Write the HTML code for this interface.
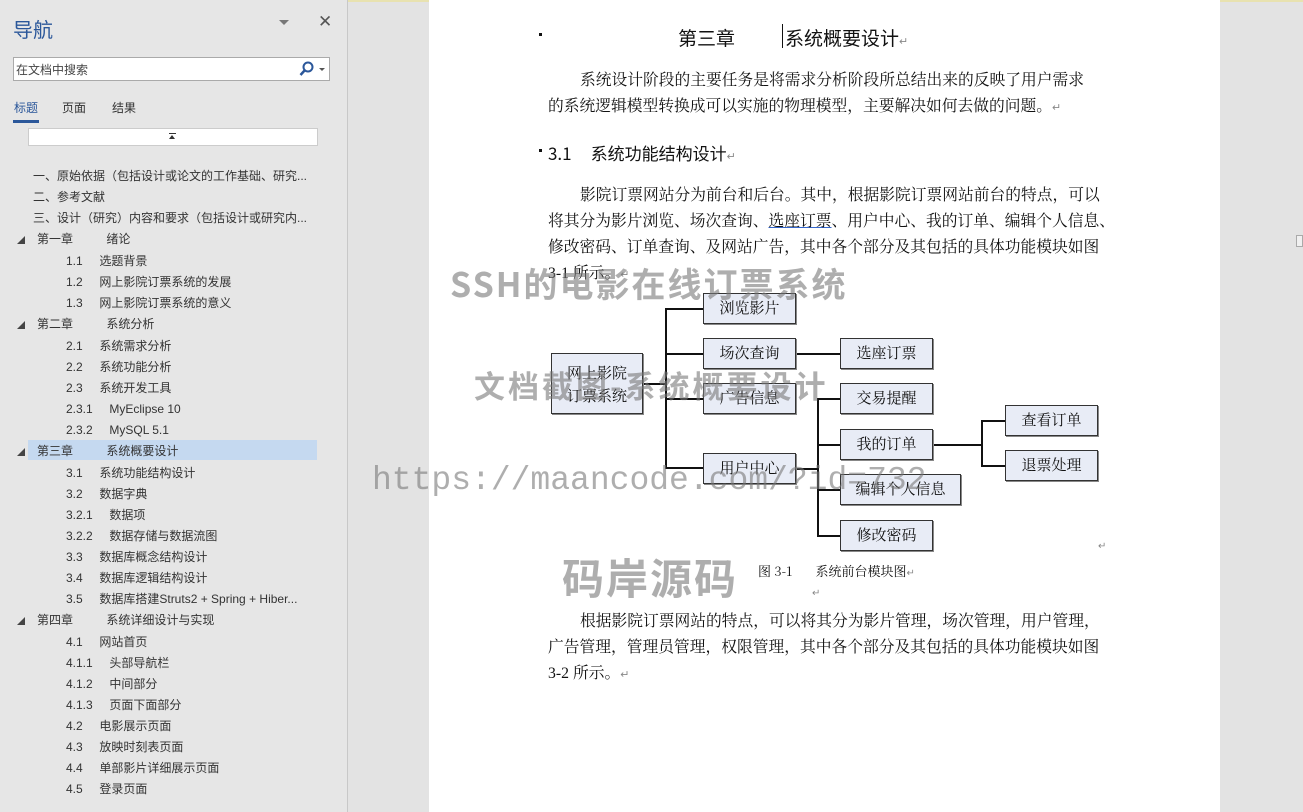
<!DOCTYPE html>
<html><head><meta charset="utf-8"><style>
*{margin:0;padding:0;box-sizing:border-box}
body{width:1303px;height:812px;overflow:hidden;background:#e3e3e3;font-family:"Liberation Sans","Noto Sans CJK SC",sans-serif;position:relative}
.nav{position:absolute;left:0;top:0;width:348px;height:812px;background:#e6e6e6;border-right:1px solid #c8c8c8}
.a{position:absolute;white-space:nowrap}
.nv{font-size:12px;color:#333}
.page{position:absolute;left:429px;top:0;width:791px;height:812px;background:#fff}
.doc{font-family:"Liberation Serif","Noto Serif CJK SC",serif;font-size:15px;color:#111}
.p{position:absolute;white-space:nowrap;font-family:"Noto Serif CJK SC",serif;font-size:15.75px;line-height:26px;color:#111}
.box{position:absolute;background:#e8ecf6;border:1.5px solid #333;box-shadow:1px 1px 0 #888;font-family:"Noto Serif CJK SC",serif;font-size:15px;text-align:center;color:#111}
.l{position:absolute;background:#111}
.wm{position:absolute;color:rgba(120,120,120,.6);font-weight:bold;white-space:nowrap;font-family:"Noto Sans CJK SC",sans-serif}
.tri{display:inline-block;width:20px;font-size:8px;color:#444}
.r{margin-left:49px}
</style></head><body>
<div style="position:absolute;left:0;top:0;width:1303px;height:2px;background:#e8e2b0"></div>
<div class="nav">
<div class="a" style="left:13px;top:14px;font-size:20px;color:#2b579a">导航</div>
<div class="a" style="left:279px;top:20px;width:0;height:0;border-left:5px solid transparent;border-right:5px solid transparent;border-top:5px solid #777"></div>
<div class="a" style="left:318px;top:12px;font-size:17px;color:#555">✕</div>
<div class="a" style="left:13px;top:57px;width:317px;height:24px;background:#fff;border:1px solid #aaa"></div>
<div class="a nv" style="left:16px;top:61px;font-size:12px;color:#444">在文档中搜索</div>
<svg class="a" style="left:299px;top:61px" width="16" height="16"><circle cx="9" cy="6" r="4.5" fill="none" stroke="#2b579a" stroke-width="2"/><line x1="6" y1="9" x2="1.5" y2="14" stroke="#2b579a" stroke-width="2.5"/></svg>
<div class="a" style="left:319px;top:68px;border-left:3px solid transparent;border-right:3px solid transparent;border-top:3px solid #555"></div>
<div class="a" style="left:14px;top:99px;font-size:12px;color:#2b579a">标题</div>
<div class="a" style="left:13px;top:120px;width:26px;height:3px;background:#2b579a"></div>
<div class="a" style="left:62px;top:99px;font-size:12px;color:#333">页面</div>
<div class="a" style="left:112px;top:99px;font-size:12px;color:#333">结果</div>
<div class="a" style="left:28px;top:128px;width:290px;height:18px;background:#fff;border:1px solid #ccc"></div>
<div class="a" style="left:169px;top:133px;width:7px;height:1px;background:#333"></div>
<div class="a" style="left:169px;top:135px;border-left:3.5px solid transparent;border-right:3.5px solid transparent;border-bottom:4px solid #333"></div>
<div class="a" style="left:28px;top:440px;width:289px;height:20px;background:#c5d9f0"></div>
<div class="a nv" style="left:33px;top:166px;line-height:21px">
一、原始依据（包括设计或论文的工作基础、研究...<br>二、参考文献<br>三、设计（研究）内容和要求（包括设计或研究内...
</div>
<div class="a nv" style="left:17px;top:229px;line-height:21px;font-size:12px">
<div><span class="tri">◢</span>第一章&nbsp;&nbsp;&nbsp;&nbsp;&nbsp;&nbsp;&nbsp;&nbsp;&nbsp;&nbsp;绪论</div>
<div class="r">1.1&nbsp;&nbsp;&nbsp;&nbsp;&nbsp;选题背景</div>
<div class="r">1.2&nbsp;&nbsp;&nbsp;&nbsp;&nbsp;网上影院订票系统的发展</div>
<div class="r">1.3&nbsp;&nbsp;&nbsp;&nbsp;&nbsp;网上影院订票系统的意义</div>
<div><span class="tri">◢</span>第二章&nbsp;&nbsp;&nbsp;&nbsp;&nbsp;&nbsp;&nbsp;&nbsp;&nbsp;&nbsp;系统分析</div>
<div class="r">2.1&nbsp;&nbsp;&nbsp;&nbsp;&nbsp;系统需求分析</div>
<div class="r">2.2&nbsp;&nbsp;&nbsp;&nbsp;&nbsp;系统功能分析</div>
<div class="r">2.3&nbsp;&nbsp;&nbsp;&nbsp;&nbsp;系统开发工具</div>
<div class="r">2.3.1&nbsp;&nbsp;&nbsp;&nbsp;&nbsp;MyEclipse 10</div>
<div class="r">2.3.2&nbsp;&nbsp;&nbsp;&nbsp;&nbsp;MySQL 5.1</div>
<div><span class="tri">◢</span>第三章&nbsp;&nbsp;&nbsp;&nbsp;&nbsp;&nbsp;&nbsp;&nbsp;&nbsp;&nbsp;系统概要设计</div>
<div class="r">3.1&nbsp;&nbsp;&nbsp;&nbsp;&nbsp;系统功能结构设计</div>
<div class="r">3.2&nbsp;&nbsp;&nbsp;&nbsp;&nbsp;数据字典</div>
<div class="r">3.2.1&nbsp;&nbsp;&nbsp;&nbsp;&nbsp;数据项</div>
<div class="r">3.2.2&nbsp;&nbsp;&nbsp;&nbsp;&nbsp;数据存储与数据流图</div>
<div class="r">3.3&nbsp;&nbsp;&nbsp;&nbsp;&nbsp;数据库概念结构设计</div>
<div class="r">3.4&nbsp;&nbsp;&nbsp;&nbsp;&nbsp;数据库逻辑结构设计</div>
<div class="r">3.5&nbsp;&nbsp;&nbsp;&nbsp;&nbsp;数据库搭建Struts2 + Spring + Hiber...</div>
<div><span class="tri">◢</span>第四章&nbsp;&nbsp;&nbsp;&nbsp;&nbsp;&nbsp;&nbsp;&nbsp;&nbsp;&nbsp;系统详细设计与实现</div>
<div class="r">4.1&nbsp;&nbsp;&nbsp;&nbsp;&nbsp;网站首页</div>
<div class="r">4.1.1&nbsp;&nbsp;&nbsp;&nbsp;&nbsp;头部导航栏</div>
<div class="r">4.1.2&nbsp;&nbsp;&nbsp;&nbsp;&nbsp;中间部分</div>
<div class="r">4.1.3&nbsp;&nbsp;&nbsp;&nbsp;&nbsp;页面下面部分</div>
<div class="r">4.2&nbsp;&nbsp;&nbsp;&nbsp;&nbsp;电影展示页面</div>
<div class="r">4.3&nbsp;&nbsp;&nbsp;&nbsp;&nbsp;放映时刻表页面</div>
<div class="r">4.4&nbsp;&nbsp;&nbsp;&nbsp;&nbsp;单部影片详细展示页面</div>
<div class="r">4.5&nbsp;&nbsp;&nbsp;&nbsp;&nbsp;登录页面</div>
</div>
</div>
<div class="page"></div>
<div class="a" style="left:1296px;top:235px;width:7px;height:12px;border:1px solid #aaa;background:#f0f0f0"></div>
<div class="doc">
<div class="a" style="left:539px;top:33px;width:3px;height:3px;background:#111"></div>
<div class="a" style="left:678px;top:24px;font-size:19px;font-family:'Noto Sans CJK SC',sans-serif">第三章</div>
<div class="a" style="left:782px;top:24px;width:1px;height:24px;background:#111"></div>
<div class="a" style="left:785px;top:24px;font-size:19px;font-family:'Noto Sans CJK SC',sans-serif">系统概要设计<span style="font-size:11px;color:#888">↵</span></div>
<div class="p" style="left:548px;top:66px"><span style="padding-left:32px"></span>系统设计阶段的主要任务是将需求分析阶段所总结出来的反映了用户需求<br>的系统逻辑模型转换成可以实施的物理模型，主要解决如何去做的问题。<span style="font-size:11px;color:#888">↵</span></div>
<div class="a" style="left:539px;top:149px;width:3px;height:3px;background:#111"></div>
<div class="a" style="left:548px;top:140px;font-size:17px;font-family:'Noto Sans CJK SC',sans-serif">3.1&nbsp;&nbsp;&nbsp;&nbsp;&nbsp;系统功能结构设计<span style="font-size:11px;color:#888">↵</span></div>
<div class="p" style="left:548px;top:181px"><span style="padding-left:32px"></span>影院订票网站分为前台和后台。其中，根据影院订票网站前台的特点，可以<br>将其分为影片浏览、场次查询、<u style="text-decoration-color:#36c">选座订票</u>、用户中心、我的订单、编辑个人信息、<br>修改密码、订单查询、及网站广告，其中各个部分及其包括的具体功能模块如图<br><span style="font-family:'Liberation Serif'">3-1</span> 所示。<span style="font-size:11px;color:#888">↵</span></div>
<div class="p" style="left:548px;top:607px"><span style="padding-left:32px"></span>根据影院订票网站的特点，可以将其分为影片管理，场次管理，用户管理，<br>广告管理，管理员管理，权限管理，其中各个部分及其包括的具体功能模块如图<br><span style="font-family:'Liberation Serif'">3-2</span> 所示。<span style="font-size:11px;color:#888">↵</span></div>
<div class="a" style="left:758px;top:561px;font-size:13px;font-family:'Noto Serif CJK SC',serif">图 3-1&nbsp;&nbsp;&nbsp;&nbsp;&nbsp;&nbsp;&nbsp;系统前台模块图<span style="font-size:10px;color:#888">↵</span></div>
<div class="a" style="left:1098px;top:541px;font-size:10px;color:#888">↵</div>
<div class="a" style="left:812px;top:588px;font-size:10px;color:#888">↵</div>
</div>
<div class="l" style="left:642px;top:383px;width:24px;height:2px"></div>
<div class="l" style="left:665px;top:308px;width:2px;height:161px"></div>
<div class="l" style="left:665px;top:308px;width:38px;height:2px"></div>
<div class="l" style="left:665px;top:353px;width:38px;height:2px"></div>
<div class="l" style="left:665px;top:398px;width:38px;height:2px"></div>
<div class="l" style="left:665px;top:467px;width:38px;height:2px"></div>
<div class="l" style="left:795px;top:353px;width:45px;height:2px"></div>
<div class="l" style="left:795px;top:468px;width:24px;height:2px"></div>
<div class="l" style="left:817px;top:398px;width:2px;height:138px"></div>
<div class="l" style="left:817px;top:398px;width:23px;height:2px"></div>
<div class="l" style="left:817px;top:444px;width:23px;height:2px"></div>
<div class="l" style="left:817px;top:489px;width:23px;height:2px"></div>
<div class="l" style="left:817px;top:535px;width:23px;height:2px"></div>
<div class="l" style="left:932px;top:444px;width:50px;height:2px"></div>
<div class="l" style="left:981px;top:420px;width:2px;height:46px"></div>
<div class="l" style="left:981px;top:420px;width:24px;height:2px"></div>
<div class="l" style="left:981px;top:465px;width:24px;height:2px"></div>
<div class="box" style="left:551px;top:353px;width:92px;height:61px;padding-top:7px;line-height:23px">网上影院<br>订票系统</div>
<div class="box" style="left:703px;top:293px;width:93px;height:31px;line-height:27px">浏览影片</div>
<div class="box" style="left:703px;top:338px;width:93px;height:31px;line-height:27px">场次查询</div>
<div class="box" style="left:703px;top:383px;width:93px;height:31px;line-height:27px">广告信息</div>
<div class="box" style="left:703px;top:453px;width:93px;height:31px;line-height:27px">用户中心</div>
<div class="box" style="left:840px;top:338px;width:93px;height:31px;line-height:27px">选座订票</div>
<div class="box" style="left:840px;top:383px;width:93px;height:31px;line-height:27px">交易提醒</div>
<div class="box" style="left:840px;top:429px;width:93px;height:31px;line-height:27px">我的订单</div>
<div class="box" style="left:840px;top:474px;width:121px;height:31px;line-height:27px">编辑个人信息</div>
<div class="box" style="left:840px;top:520px;width:93px;height:31px;line-height:27px">修改密码</div>
<div class="box" style="left:1005px;top:405px;width:93px;height:31px;line-height:27px">查看订单</div>
<div class="box" style="left:1005px;top:450px;width:93px;height:31px;line-height:27px">退票处理</div>
<div class="wm" style="left:450px;top:258px;font-size:34px;letter-spacing:2px">SSH的电影在线订票系统</div>
<div class="wm" style="left:474px;top:362px;font-size:31px;letter-spacing:3px">文档截图-系统概要设计</div>
<div class="wm" style="left:372px;top:462px;font-size:33px;font-family:'Liberation Mono',monospace;font-weight:normal">https://maancode.com/?id=732</div>
<div class="wm" style="left:562px;top:546px;font-size:42px;letter-spacing:2px">码岸源码</div>
</body></html>
